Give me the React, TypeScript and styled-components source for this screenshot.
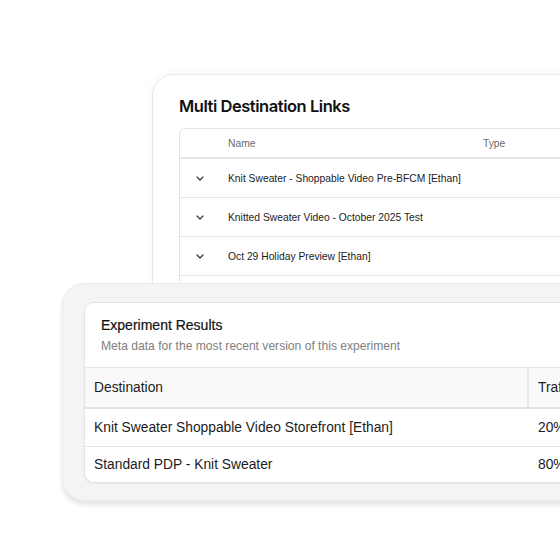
import styled, { createGlobalStyle } from "styled-components";

const GlobalStyle = createGlobalStyle`
  html, body {
    margin: 0;
    padding: 0;
    background: #ffffff;
    overflow: hidden;
  }
  body {
    font-family: "Liberation Sans", Arial, sans-serif;
    color: #1a1a1a;
  }
`;

const Stage = styled.div`
  width: 560px;
  height: 536px;
  overflow: hidden;
  display: grid;
  grid-template-areas: "stack";
  align-items: start;
  justify-items: start;
`;

const BackCard = styled.section`
  grid-area: stack;
  margin: 74px 0 0 152px;
  width: 470px;
  height: 240px;
  background: #ffffff;
  border: 1px solid #e9e9e9;
  border-radius: 22px;
  box-shadow: 0 0 10px rgba(0, 0, 0, 0.05);
  padding: 20px 0 0 26px;
  box-sizing: border-box;
`;

const BackTitle = styled.h2`
  margin: 0 0 11px;
  font-family: Inter, "Liberation Sans", sans-serif;
  font-weight: 600;
  font-size: 16.5px;
  letter-spacing: -0.45px;
  color: #111111;
  line-height: 22px;
`;

const LinkTable = styled.div`
  border-top: 1px solid #e3e3e3;
  border-left: 1px solid #e3e3e3;
  border-top-left-radius: 6px;
`;

const LinkRow = styled.div<{ $head?: boolean }>`
  display: grid;
  grid-template-columns: 48px 255px 1fr;
  align-items: center;
  height: ${(p) => (p.$head ? "28px" : "38px")};
  border-bottom: ${(p) => (p.$head ? "2px" : "1px")} solid #e6e6e6;
  font-size: 10.3px;
  color: ${(p) => (p.$head ? "#6b6b6b" : "#1c1c1c")};
`;

const ChevronCell = styled.div`
  display: flex;
  justify-content: center;
  padding-right: 8px;
  color: #333333;
`;

const FrontFrame = styled.section`
  grid-area: stack;
  z-index: 1;
  margin: 283px 0 0 62px;
  width: 540px;
  background: #f4f4f4;
  border: 1px solid #ebebeb;
  border-radius: 22px;
  padding: 18px 0 17px 21px;
  box-sizing: border-box;
  box-shadow: 0 4px 5px rgba(0, 0, 0, 0.1);
`;

const ResultsCard = styled.div`
  background: #ffffff;
  border: 1px solid #e2e2e2;
  border-radius: 10px;
  box-shadow: 0 1px 2px rgba(0, 0, 0, 0.06);
  overflow: hidden;
`;

const ResultsHeader = styled.div`
  padding: 13px 16px 13px;
`;

const ResultsTitle = styled.h3`
  margin: 0 0 4px;
  font-size: 14px;
  font-weight: 400;
  color: #111111;
  -webkit-text-stroke: 0.2px #111111;
  line-height: 18px;
`;

const ResultsSub = styled.p`
  margin: 0;
  font-size: 12.1px;
  color: #808080;
  line-height: 16px;
`;

const ResultsRow = styled.div<{ $head?: boolean }>`
  display: grid;
  grid-template-columns: 444px 1fr;
  height: ${(p) => (p.$head ? "39px" : "37px")};
  background: ${(p) => (p.$head ? "#f9f9f9" : "#ffffff")};
  border-top: ${(p) => (p.$head ? "1px solid #e6e6e6" : "none")};
  border-bottom: ${(p) => (p.$head ? "2px solid #e2e2e2" : "1px solid #e4e4e4")};
  font-size: 13.8px;
  color: #1c1c1c;
  &:last-child {
    border-bottom: none;
    height: 35px;
  }
`;

const ResultsCell = styled.div<{ $divider?: boolean }>`
  display: flex;
  align-items: center;
  padding-left: 9px;
  white-space: nowrap;
  border-right: ${(p) => (p.$divider ? "2px solid #e6e6e6" : "none")};
`;

const Chevron = () => (
  <svg width="8" height="5" viewBox="0 0 8 5" fill="none">
    <path d="M1 1l3 3 3-3" stroke="currentColor" strokeWidth="1.2" strokeLinecap="round" strokeLinejoin="round" />
  </svg>
);

const links = [
  "Knit Sweater - Shoppable Video Pre-BFCM [Ethan]",
  "Knitted Sweater Video - October 2025 Test",
  "Oct 29 Holiday Preview [Ethan]",
  "",
];

const results = [
  { dest: "Knit Sweater Shoppable Video Storefront [Ethan]", traffic: "20%" },
  { dest: "Standard PDP - Knit Sweater", traffic: "80%" },
];

export default function App() {
  return (
    <>
      <GlobalStyle />
      <Stage>
        <BackCard>
          <BackTitle>Multi Destination Links</BackTitle>
          <LinkTable>
            <LinkRow $head>
              <span />
              <span>Name</span>
              <span>Type</span>
            </LinkRow>
            {links.map((name, i) => (
              <LinkRow key={i}>
                <ChevronCell>{name && <Chevron />}</ChevronCell>
                <span>{name}</span>
                <span />
              </LinkRow>
            ))}
          </LinkTable>
        </BackCard>

        <FrontFrame>
          <ResultsCard>
            <ResultsHeader>
              <ResultsTitle>Experiment Results</ResultsTitle>
              <ResultsSub>Meta data for the most recent version of this experiment</ResultsSub>
            </ResultsHeader>
            <ResultsRow $head>
              <ResultsCell $divider>Destination</ResultsCell>
              <ResultsCell>Traffic</ResultsCell>
            </ResultsRow>
            {results.map((r) => (
              <ResultsRow key={r.dest}>
                <ResultsCell>{r.dest}</ResultsCell>
                <ResultsCell>{r.traffic}</ResultsCell>
              </ResultsRow>
            ))}
          </ResultsCard>
        </FrontFrame>
      </Stage>
    </>
  );
}
